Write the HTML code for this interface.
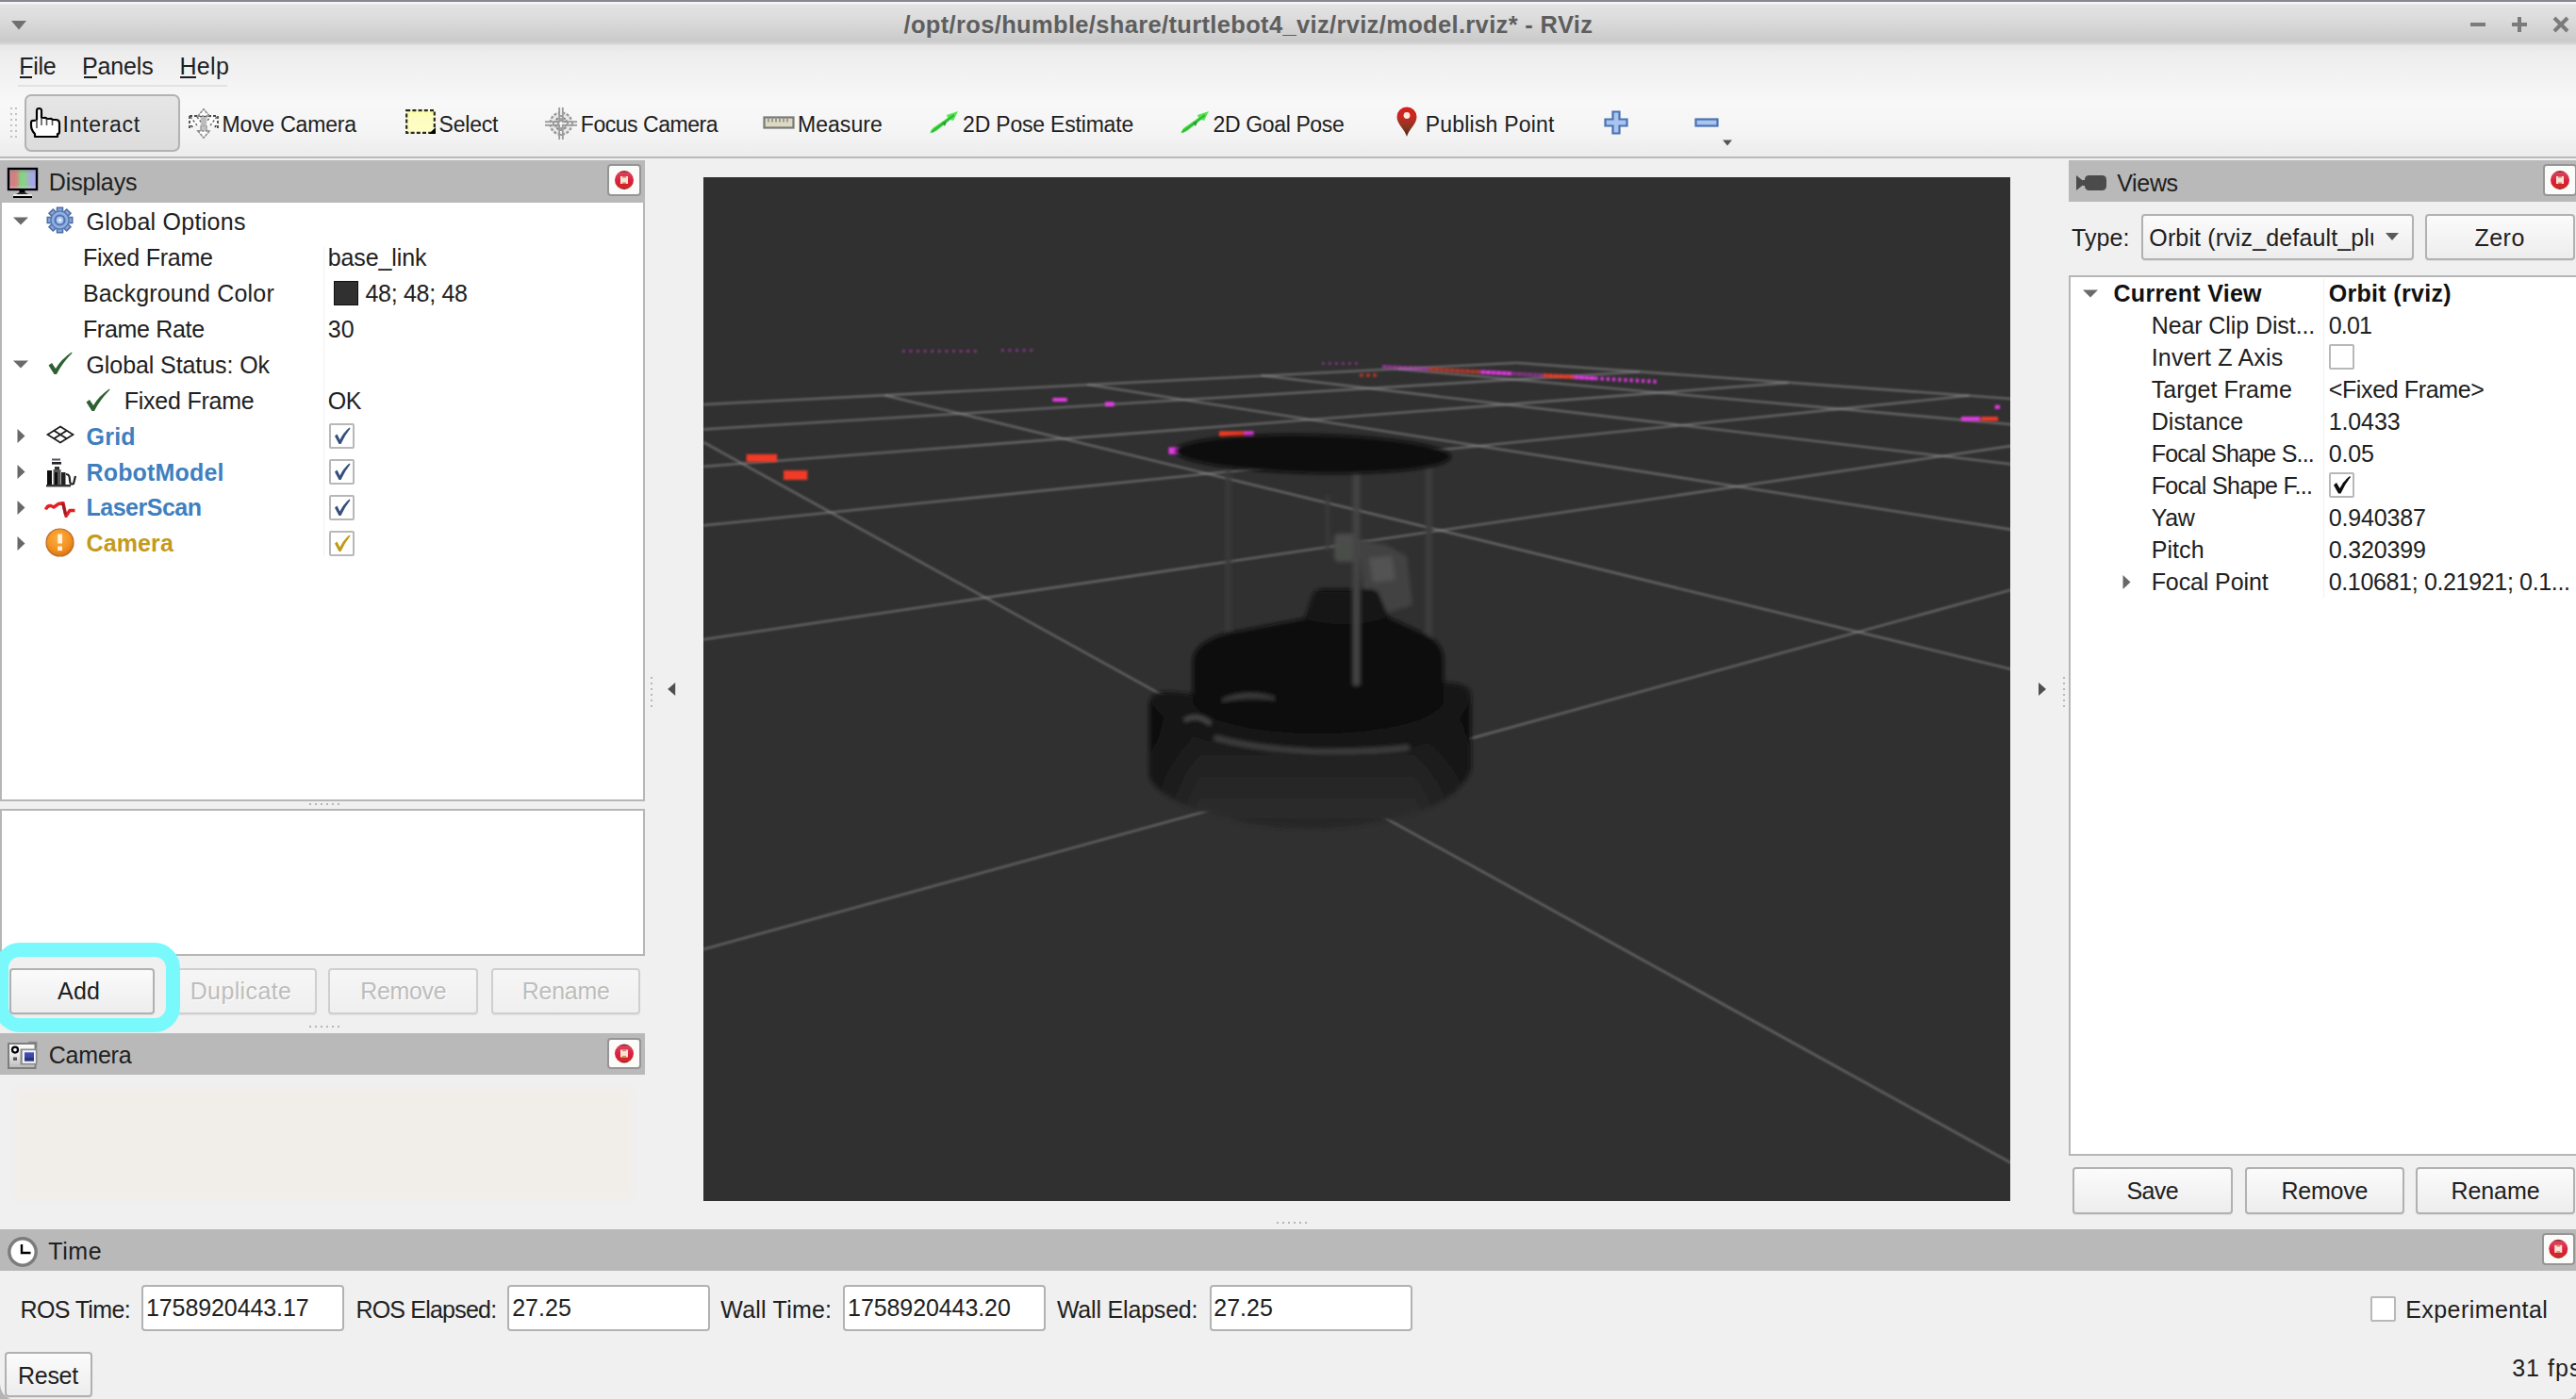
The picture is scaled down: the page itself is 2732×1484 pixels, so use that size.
<!DOCTYPE html>
<html><head><meta charset="utf-8"><title>RViz</title>
<style>
html,body{margin:0;padding:0;background:#f0f0f0;}
#root{position:relative;width:2732px;height:1484px;overflow:hidden;background:#f0f0f0;font-family:"Liberation Sans",sans-serif;}
.a{position:absolute;box-sizing:border-box;}
.t{position:absolute;white-space:pre;font-family:"Liberation Sans",sans-serif;}
.btn{position:absolute;box-sizing:border-box;border:2px solid #b1b1b1;border-radius:4px;background:linear-gradient(#fbfbfb,#ededed);box-shadow:0 1px 1px rgba(0,0,0,.06);}
.btn.dis{border-color:#cfcfcf;background:linear-gradient(#f6f6f6,#efefef);}
.hdr{position:absolute;background:#b9b9b9;}
.cls{position:absolute;box-sizing:border-box;background:#fbfbfa;border:2px solid #959595;border-radius:4px;}
.box{position:absolute;box-sizing:border-box;background:#fff;border:2px solid #b6b6b6;}
.inp{position:absolute;box-sizing:border-box;background:#fff;border:2px solid #b2b2b2;border-radius:4px;}
.cb{position:absolute;box-sizing:border-box;background:#fff;border:2px solid #b8b8b8;border-radius:2px;width:27px;height:27px;}
svg{position:absolute;overflow:visible;}
</style></head><body><div id="root">
<div class='a' style='left:0px;top:0px;width:2732px;height:48px;background:linear-gradient(#878990 0,#878990 1.8px,#f6f6f6 2.4px,#f6f6f6 3.6px,#e3e3e3 5px,#dddddd 18px,#d3d3d3 32px,#cacaca 43px,#d2d2d2 46px,#e6e6e6 48px);'></div>
<svg style='left:12px;top:22px' width='17' height='10'><path d='M0 0H16L8 9.5Z' fill='#707070' filter='url(#ib)'/></svg>
<svg style='left:2619px;top:16px' width='110' height='22'><g stroke='#7b7b7b' stroke-width='4' fill='none'><path d='M1 10H17'/><path d='M45 10H61M53 2V18'/><path d='M90 3L104 17M104 3L90 17'/></g></svg>
<div class='a' style='left:0px;top:48px;width:2732px;height:118px;background:linear-gradient(#e6e6e6 0,#ededed 8px,#f8f8f8 62px,#f5f5f5 90px,#ececec 118px);'></div>
<div class='a' style='left:19px;top:90px;width:222px;height:2px;background:#e2e2e2;'></div>
<div class='a' style='left:21px;top:81px;width:13px;height:2px;background:#1c1c1c;'></div>
<div class='a' style='left:89px;top:81px;width:14px;height:2px;background:#1c1c1c;'></div>
<div class='a' style='left:191px;top:81px;width:17px;height:2px;background:#1c1c1c;'></div>
<div class='a' style='left:0px;top:166px;width:2732px;height:2px;background:#b9b9b9;'></div>
<svg style='left:10px;top:113px' width='10' height='36'><rect x='1' y='1' width='2' height='2' fill='#c2c2c2'/><rect x='1' y='7' width='2' height='2' fill='#c2c2c2'/><rect x='1' y='13' width='2' height='2' fill='#c2c2c2'/><rect x='1' y='19' width='2' height='2' fill='#c2c2c2'/><rect x='1' y='25' width='2' height='2' fill='#c2c2c2'/><rect x='1' y='31' width='2' height='2' fill='#c2c2c2'/><rect x='6' y='1' width='2' height='2' fill='#c2c2c2'/><rect x='6' y='7' width='2' height='2' fill='#c2c2c2'/><rect x='6' y='13' width='2' height='2' fill='#c2c2c2'/><rect x='6' y='19' width='2' height='2' fill='#c2c2c2'/><rect x='6' y='25' width='2' height='2' fill='#c2c2c2'/><rect x='6' y='31' width='2' height='2' fill='#c2c2c2'/></svg>
<div class='a' style='left:26px;top:100px;width:165px;height:61px;border:2px solid #b2b2b2;border-radius:7px;background:linear-gradient(#e6e6e6,#dcdcdc);'></div>
<div class='hdr' style='left:0px;top:170px;width:684px;height:45px;'></div>
<div class='box' style='left:0px;top:215px;width:684px;height:635px;border-top:0;'></div>
<div class='a' style='left:343px;top:262px;width:1px;height:328px;background:#f1f1f1;'></div>
<svg style='left:328px;top:852px' width='40' height='40'><rect x='0' y='0' width='2' height='2' fill='#b5b5b5'/><rect x='6' y='0' width='2' height='2' fill='#b5b5b5'/><rect x='12' y='0' width='2' height='2' fill='#b5b5b5'/><rect x='18' y='0' width='2' height='2' fill='#b5b5b5'/><rect x='24' y='0' width='2' height='2' fill='#b5b5b5'/><rect x='30' y='0' width='2' height='2' fill='#b5b5b5'/></svg>
<div class='box' style='left:0px;top:858px;width:684px;height:156px;'></div>
<svg style='left:328px;top:1088px' width='40' height='40'><rect x='0' y='0' width='2' height='2' fill='#b5b5b5'/><rect x='6' y='0' width='2' height='2' fill='#b5b5b5'/><rect x='12' y='0' width='2' height='2' fill='#b5b5b5'/><rect x='18' y='0' width='2' height='2' fill='#b5b5b5'/><rect x='24' y='0' width='2' height='2' fill='#b5b5b5'/><rect x='30' y='0' width='2' height='2' fill='#b5b5b5'/></svg>
<div class='a' style='left:354px;top:298px;width:26px;height:26px;background:#303030;border:1px solid #111;'></div>
<div class='btn' style='left:9.6px;top:1027px;width:154.0px;height:48.5px;'></div>
<div class='btn dis' style='left:176.5px;top:1027px;width:159.0px;height:48.5px;'></div>
<div class='btn dis' style='left:348.3px;top:1027px;width:158.89999999999998px;height:48.5px;'></div>
<div class='btn dis' style='left:520.6px;top:1027px;width:158.89999999999998px;height:48.5px;'></div>
<div class='a' style='left:-6px;top:1000px;width:196.5px;height:94.59999999999991px;border:15.6px solid #7af9fd;border-radius:27px;'></div>
<div class='hdr' style='left:0px;top:1096px;width:684px;height:44px;'></div>
<div class='a' style='left:17px;top:1156px;width:652px;height:116px;background:#f1ede8;filter:blur(3.5px);'></div>
<div class='a' style='left:746px;top:188px;width:1386px;height:1086px;background:#303030;overflow:hidden;'></div>
<svg style='left:708px;top:724px' width='9' height='14'><path d='M8.2 0V14L0.2 7Z' fill='#505050' filter='url(#ib)'/></svg>
<svg style='left:2162px;top:724px' width='9' height='14'><path d='M0 0V14L8 7Z' fill='#505050' filter='url(#ib)'/></svg>
<svg style='left:2188px;top:718px' width='40' height='40'><rect x='0' y='0' width='2' height='2' fill='#b8b8b8'/><rect x='0' y='6' width='2' height='2' fill='#b8b8b8'/><rect x='0' y='12' width='2' height='2' fill='#b8b8b8'/><rect x='0' y='18' width='2' height='2' fill='#b8b8b8'/><rect x='0' y='24' width='2' height='2' fill='#b8b8b8'/><rect x='0' y='30' width='2' height='2' fill='#b8b8b8'/></svg>
<svg style='left:690px;top:718px' width='40' height='40'><rect x='0' y='0' width='2' height='2' fill='#b8b8b8'/><rect x='0' y='6' width='2' height='2' fill='#b8b8b8'/><rect x='0' y='12' width='2' height='2' fill='#b8b8b8'/><rect x='0' y='18' width='2' height='2' fill='#b8b8b8'/><rect x='0' y='24' width='2' height='2' fill='#b8b8b8'/><rect x='0' y='30' width='2' height='2' fill='#b8b8b8'/></svg>
<svg style='left:1354px;top:1296px' width='40' height='40'><rect x='0' y='0' width='2' height='2' fill='#b5b5b5'/><rect x='6' y='0' width='2' height='2' fill='#b5b5b5'/><rect x='12' y='0' width='2' height='2' fill='#b5b5b5'/><rect x='18' y='0' width='2' height='2' fill='#b5b5b5'/><rect x='24' y='0' width='2' height='2' fill='#b5b5b5'/><rect x='30' y='0' width='2' height='2' fill='#b5b5b5'/></svg>
<div class='hdr' style='left:2194px;top:170px;width:538px;height:44px;'></div>
<div class='btn' style='left:2271px;top:226.5px;width:289px;height:49.30000000000001px;'></div>
<svg style='left:2530px;top:247px' width='15' height='9'><path d='M0 0H14L7 8Z' fill='#5a5a5a'/></svg>
<div class='btn' style='left:2572px;top:226.5px;width:159px;height:49.30000000000001px;'></div>
<div class='box' style='left:2194px;top:292px;width:546px;height:934px;'></div>
<div class='a' style='left:2464px;top:296px;width:1px;height:338px;background:#f1f1f1;'></div>
<div class='cb' style='left:2470px;top:365px;width:27px;height:27px;'></div>
<div class='cb' style='left:2470px;top:501px;width:27px;height:27px;'></div>
<div class='btn' style='left:2198px;top:1238.3px;width:169.69999999999982px;height:49.40000000000009px;'></div>
<div class='btn' style='left:2380.5px;top:1238.3px;width:169.0px;height:49.40000000000009px;'></div>
<div class='btn' style='left:2562.4px;top:1238.3px;width:168.19999999999982px;height:49.40000000000009px;'></div>
<div class='hdr' style='left:0px;top:1304px;width:2732px;height:43.799999999999955px;'></div>
<div class='inp' style='left:150.4px;top:1362.5px;width:214.99999999999997px;height:49.0px;'></div>
<div class='inp' style='left:538.4px;top:1362.5px;width:215.0px;height:49.0px;'></div>
<div class='inp' style='left:894.3px;top:1362.5px;width:215.10000000000014px;height:49.0px;'></div>
<div class='inp' style='left:1282.5px;top:1362.5px;width:215.0999999999999px;height:49.0px;'></div>
<div class='cb' style='left:2514px;top:1375px;width:27px;height:27px;'></div>
<div class='btn' style='left:4.6px;top:1434.2px;width:93.0px;height:47.5px;'></div>
<svg style='left:0;top:1464px' width='14' height='20'><path d='M0 4 Q0.3 15 10.5 20 L0 20 Z' fill='#b4b4b4' filter='url(#ib)'/></svg>
<svg style='left:2722px;top:1474px' width='10' height='10'><path d='M10 2.5 Q8.5 8 2.5 10 L10 10 Z' fill='#b8b8b8' filter='url(#ib)'/></svg>
<svg width='0' height='0' style='left:0;top:0'><defs><filter id='ib' x='-10%' y='-10%' width='120%' height='120%'><feGaussianBlur stdDeviation='0.6'/></filter></defs></svg>
<svg style='left:32px;top:114px' width='32' height='32' viewBox='0 0 32 32' ><g filter='url(#ib)'><path d='M7 13 V3.5 Q7 1 9.5 1 Q12 1 12 3.5 V11 H15 Q17 10.5 17.5 12 H21 Q23 11.5 23.5 13 H27 Q31 13 31 17 V26 Q31 28 29 28 V31 H5 V28 Q1 24 1 19 V16 Q1 13.5 4 14 Z' fill='#fff' stroke='#000' stroke-width='2.2' stroke-linejoin='round'/>
<path d='M7 13V22M12 11V19M17.5 12.5V19M23.5 13.5V19' stroke='#555' stroke-width='1.6' fill='none'/></g></svg>
<svg style='left:199px;top:115px' width='34' height='32' viewBox='0 0 34 32' ><g filter='url(#ib)'>
<path d='M17 1 L23 8 H20 V24 H23 L17 31 L11 24 H14 V8 H11 Z' fill='#c4c4c4' stroke='#9a9a9a' stroke-width='1.4'/>
<path d='M1 8 H33 V19 H1 Z' fill='none'/>
<path d='M2 8 H32 V20 H29 L32 14 M2 8 V20 H5 L2 14' fill='none' stroke='#4a4a4a' stroke-width='1.8' stroke-dasharray='3 2'/>
<path d='M3 10 H31 V18 H3 Z' fill='#fff' fill-opacity='.85'/>
<path d='M3 9 L10 18 M31 9 L24 18 M10 9 L17 18 L24 9' stroke='#6a6a6a' stroke-width='1.5' fill='none' stroke-dasharray='2.5 2'/>
<rect x='14' y='9' width='6' height='9' fill='#bdbdbd'/>
<path d='M11 24 H23 L17 31 Z' fill='#fff' stroke='#8a8a8a' stroke-width='1.5' stroke-dasharray='2.5 1.5'/>
<path d='M11 8 H23 L17 1 Z' fill='#fff' stroke='#8a8a8a' stroke-width='1.5' stroke-dasharray='2.5 1.5'/>
</g></svg>
<svg style='left:430px;top:116px' width='32' height='26' viewBox='0 0 32 26' ><defs><linearGradient id='sy' x1='0' y1='0' x2='0' y2='1'><stop offset='0' stop-color='#ffffa8'/><stop offset='.3' stop-color='#fdfdc0'/><stop offset='1' stop-color='#fdfdc6'/></linearGradient></defs>
<g filter='url(#ib)'><rect x='1.2' y='1.2' width='29.6' height='23.6' fill='url(#sy)' stroke='#2a2a1a' stroke-width='2.2' stroke-dasharray='4 2.2'/>
<path d='M32 19 V26 H25 Z' fill='#000'/></g></svg>
<svg style='left:577px;top:113px' width='36' height='36' viewBox='0 0 36 36' ><g filter='url(#ib)' fill='none'>
<circle cx='18' cy='18' r='11.5' fill='#e9e9e9' stroke='#9a9a9a' stroke-width='2.4' stroke-dasharray='3 1.6'/>
<circle cx='18' cy='18' r='6.5' fill='#d4d4d4' stroke='#8c8c8c' stroke-width='2' stroke-dasharray='2.5 1.5'/>
<path d='M18 1 V35 M1 18 H35' stroke='#9c9c9c' stroke-width='5.5'/>
<path d='M18 1 V35 M1 18 H35' stroke='#fff' stroke-width='1.6' stroke-dasharray='8 2 3 2'/>
<path d='M13 13 H23 V23 H13 Z' stroke='#8a8a8a' stroke-width='1.4' stroke-dasharray='2 2'/>
</g></svg>
<svg style='left:809px;top:123px' width='34' height='14' viewBox='0 0 34 14' ><g filter='url(#ib)'><rect x='1.5' y='1.5' width='31' height='11' fill='#dedac2' stroke='#787878' stroke-width='2.2'/>
<path d='M6 3V6.5M10 3V6.5M14 3V6.5M18 3V6.5M22 3V6.5M26 3V6.5' stroke='#8a8a80' stroke-width='1.6'/></g></svg>
<svg style='left:985px;top:117px' width='32' height='26' viewBox='0 0 32 26' ><g filter='url(#ib)'><path d='M1 24.5 L4 19 L20 8 L19 5 L31 1 L26 11 L23 10 L8 22 Z' fill='#4fe94f'/>
<path d='M3 23 L27 5' stroke='#36b83c' stroke-width='2.4' fill='none'/><path d='M14 13 l5 -1 l-2 5z' fill='#2a9a30'/></g></svg>
<svg style='left:1251px;top:117px' width='32' height='26' viewBox='0 0 32 26' ><g filter='url(#ib)'><path d='M1 24.5 L4 19 L20 8 L19 5 L31 1 L26 11 L23 10 L8 22 Z' fill='#4fe94f'/>
<path d='M3 23 L27 5' stroke='#36b83c' stroke-width='2.4' fill='none'/><path d='M14 13 l5 -1 l-2 5z' fill='#2a9a30'/></g></svg>
<svg style='left:1480px;top:113px' width='24' height='33' viewBox='0 0 24 33' ><defs><linearGradient id='pp' x1='0' y1='0' x2='0' y2='1'><stop offset='0' stop-color='#d81e1e'/><stop offset='.35' stop-color='#c42a22'/><stop offset='.7' stop-color='#86361f'/><stop offset='1' stop-color='#4a2418'/></linearGradient></defs>
<g filter='url(#ib)'><path d='M12 32 C10 24 1.5 19 1.5 11 A10.5 10.5 0 0 1 22.5 11 C22.5 19 14 24 12 32 Z' fill='url(#pp)'/>
<circle cx='12' cy='9.5' r='3.4' fill='#ffe9dc'/></g></svg>
<svg style='left:1701px;top:117px' width='26' height='26' viewBox='0 0 26 26' ><g filter='url(#ib)'><path d='M9.5 1.5 H16.5 V9.5 H24.5 V16.5 H16.5 V24.5 H9.5 V16.5 H1.5 V9.5 H9.5 Z' fill='#a9c4ee' stroke='#4a72b4' stroke-width='2.2'/></g></svg>
<svg style='left:1797px;top:125px' width='26' height='10' viewBox='0 0 26 10' ><g filter='url(#ib)'><rect x='1.5' y='1.5' width='23' height='7' fill='#a9c4ee' stroke='#4a72b4' stroke-width='2.2'/></g></svg>
<svg style='left:1827px;top:148px' width='10' height='7' viewBox='0 0 10 7' ><path d='M0 0.5 H10 L5 6.5 Z' fill='#555'/></svg>
<svg style='left:8px;top:178px' width='32' height='32' viewBox='0 0 32 32' ><defs><linearGradient id='mg' x1='0' y1='0' x2='1' y2='0'><stop offset='0' stop-color='#c88'/><stop offset='.22' stop-color='#d27f80'/><stop offset='.34' stop-color='#c09a80'/><stop offset='.42' stop-color='#86cf86'/><stop offset='.6' stop-color='#8fcf8c'/><stop offset='.7' stop-color='#9fb4c8'/><stop offset='.85' stop-color='#a6a6ee'/><stop offset='1' stop-color='#aab'/></linearGradient>
<linearGradient id='mg2' x1='0' y1='0' x2='0' y2='1'><stop offset='0' stop-color='#888' stop-opacity='.55'/><stop offset='.2' stop-color='#888' stop-opacity='0'/><stop offset='.85' stop-color='#fff' stop-opacity='0'/><stop offset='1' stop-color='#fff' stop-opacity='.35'/></linearGradient></defs>
<g filter='url(#ib)'><rect x='1' y='1' width='30' height='22' fill='url(#mg)' stroke='#050010' stroke-width='2.4'/><rect x='2.2' y='2.2' width='27.6' height='19.6' fill='url(#mg2)'/>
<rect x='12.5' y='24' width='6' height='4' fill='#000'/><rect x='6' y='28' width='20' height='2' fill='#e8e8e8'/><rect x='6' y='30' width='20' height='2' fill='#000'/><path d='M9 28 L12.5 26 H18.5 L22 28' fill='#222'/></g></svg>
<svg style='left:14px;top:230px' width='16' height='9' viewBox='0 0 16 9' ><path d='M0 0.5 H16 L8 8.5 Z' fill='#6a6a6a' filter='url(#ib)'/></svg>
<svg style='left:14px;top:382px' width='16' height='9' viewBox='0 0 16 9' ><path d='M0 0.5 H16 L8 8.5 Z' fill='#6a6a6a' filter='url(#ib)'/></svg>
<svg style='left:18px;top:455.0px' width='9' height='15' viewBox='0 0 9 15' ><path d='M0.5 0 V15 L8.5 7.5 Z' fill='#676767' filter='url(#ib)'/></svg>
<svg style='left:18px;top:492.8px' width='9' height='15' viewBox='0 0 9 15' ><path d='M0.5 0 V15 L8.5 7.5 Z' fill='#676767' filter='url(#ib)'/></svg>
<svg style='left:18px;top:530.7px' width='9' height='15' viewBox='0 0 9 15' ><path d='M0.5 0 V15 L8.5 7.5 Z' fill='#676767' filter='url(#ib)'/></svg>
<svg style='left:18px;top:568.5px' width='9' height='15' viewBox='0 0 9 15' ><path d='M0.5 0 V15 L8.5 7.5 Z' fill='#676767' filter='url(#ib)'/></svg>
<svg style='left:2209px;top:307px' width='16' height='9' viewBox='0 0 16 9' ><path d='M0 0.5 H16 L8 8.5 Z' fill='#6a6a6a' filter='url(#ib)'/></svg>
<svg style='left:2251px;top:609.5px' width='9' height='15' viewBox='0 0 9 15' ><path d='M0.5 0 V15 L8.5 7.5 Z' fill='#676767' filter='url(#ib)'/></svg>
<svg style='left:49.5px;top:219.5px' width='27' height='27' viewBox='0 0 27 27' ><g filter='url(#ib)'><rect x='10.5' y='0.3' width='6' height='6' transform='rotate(0 13.5 13.5)' fill='#86a6dc' stroke='#4f6fa4' stroke-width='1.6'/><rect x='10.5' y='0.3' width='6' height='6' transform='rotate(45 13.5 13.5)' fill='#86a6dc' stroke='#4f6fa4' stroke-width='1.6'/><rect x='10.5' y='0.3' width='6' height='6' transform='rotate(90 13.5 13.5)' fill='#86a6dc' stroke='#4f6fa4' stroke-width='1.6'/><rect x='10.5' y='0.3' width='6' height='6' transform='rotate(135 13.5 13.5)' fill='#86a6dc' stroke='#4f6fa4' stroke-width='1.6'/><rect x='10.5' y='0.3' width='6' height='6' transform='rotate(180 13.5 13.5)' fill='#86a6dc' stroke='#4f6fa4' stroke-width='1.6'/><rect x='10.5' y='0.3' width='6' height='6' transform='rotate(225 13.5 13.5)' fill='#86a6dc' stroke='#4f6fa4' stroke-width='1.6'/><rect x='10.5' y='0.3' width='6' height='6' transform='rotate(270 13.5 13.5)' fill='#86a6dc' stroke='#4f6fa4' stroke-width='1.6'/><rect x='10.5' y='0.3' width='6' height='6' transform='rotate(315 13.5 13.5)' fill='#86a6dc' stroke='#4f6fa4' stroke-width='1.6'/><circle cx='13.5' cy='13.5' r='9.6' fill='#8eaee4' stroke='#5676ac' stroke-width='1.4'/>
<circle cx='13.5' cy='13.5' r='5' fill='#a9c6f4' stroke='#5273ad' stroke-width='2.2'/><circle cx='13.5' cy='13.5' r='1.8' fill='#eaf3ff'/></g></svg>
<svg style='left:50px;top:372px' width='27' height='26' viewBox='0 0 27 26' ><path d='M1.5 15.5 L5 13 L9 19 Q15 9 26 1.5 L26.5 2.5 Q16 13 10 25 H7.5 Z' fill='#2f6130' filter='url(#ib)'/></svg>
<svg style='left:90px;top:410.5px' width='27' height='26' viewBox='0 0 27 26' ><path d='M1.5 15.5 L5 13 L9 19 Q15 9 26 1.5 L26.5 2.5 Q16 13 10 25 H7.5 Z' fill='#2f6130' filter='url(#ib)'/></svg>
<svg style='left:49px;top:451px' width='30' height='20' viewBox='0 0 30 20' ><g filter='url(#ib)' fill='none' stroke='#1a1a1a' stroke-width='1.7'><path d='M15 1.5 L28.5 10 L15 18.5 L1.5 10 Z'/><path d='M8.2 5.8 L21.8 14.2 M21.8 5.8 L8.2 14.2'/></g></svg>
<svg style='left:48px;top:485px' width='33' height='32' viewBox='0 0 33 32' ><g filter='url(#ib)'><rect x='7' y='1.5' width='9' height='2' fill='#556'/><rect x='7' y='5' width='10' height='2.6' fill='#222'/>
<rect x='10' y='10' width='5' height='4' fill='#333'/><rect x='2' y='14' width='5' height='17' fill='#111'/><rect x='8.5' y='13' width='8' height='18' fill='#555'/><rect x='10' y='16' width='3' height='15' fill='#111'/>
<rect x='17' y='16' width='4.5' height='15' fill='#222'/><path d='M22 18 Q26 18 26 24 Q26 30 30 28 L32 20' stroke='#222' stroke-width='2.2' fill='none'/><rect x='1' y='29' width='26' height='2.4' fill='#333'/></g></svg>
<svg style='left:47px;top:531px' width='34' height='20' viewBox='0 0 34 20' ><g filter='url(#ib)' fill='none' stroke-linejoin='round'><path d='M1.5 9.5 Q3 5 7 5.5 L10 7 L15 3.5 L20 2.5 L23 16.5 L27 10.5 L32.5 10.5' stroke='#e02424' stroke-width='3.4'/><path d='M19.5 3 L22.5 15' stroke='#9c1c28' stroke-width='3'/></g></svg>
<svg style='left:47.5px;top:559.5px' width='31' height='31' viewBox='0 0 31 31' ><defs><radialGradient id='wg' cx='.45' cy='.35' r='.7'><stop offset='0' stop-color='#fbb040'/><stop offset='.6' stop-color='#f39222'/><stop offset='1' stop-color='#d86f10'/></radialGradient></defs>
<g filter='url(#ib)'><circle cx='15.5' cy='15.5' r='14.5' fill='url(#wg)' stroke='#b86a28' stroke-width='1.2'/><rect x='13.2' y='6.5' width='4.8' height='10' fill='#fff3df'/><rect x='13.2' y='19.5' width='4.8' height='4.6' fill='#fff3df'/></g></svg>
<div class='cb' style='left:348.5px;top:449.0px;width:27.0px;height:27.0px;'></div>
<svg style='left:348.5px;top:449.0px' width='27' height='27' viewBox='0 0 27 27' ><path d='M6 13.5 L8.5 11.5 L11.5 17.5 Q15 10 21.5 4.5 L22.5 5.5 Q16.5 13 12.5 22 H10.5 Z' fill='#35507c' filter='url(#ib)'/></svg>
<div class='cb' style='left:348.5px;top:486.8px;width:27.0px;height:26.999999999999943px;'></div>
<svg style='left:348.5px;top:486.8px' width='27' height='27' viewBox='0 0 27 27' ><path d='M6 13.5 L8.5 11.5 L11.5 17.5 Q15 10 21.5 4.5 L22.5 5.5 Q16.5 13 12.5 22 H10.5 Z' fill='#35507c' filter='url(#ib)'/></svg>
<div class='cb' style='left:348.5px;top:524.7px;width:27.0px;height:27.0px;'></div>
<svg style='left:348.5px;top:524.7px' width='27' height='27' viewBox='0 0 27 27' ><path d='M6 13.5 L8.5 11.5 L11.5 17.5 Q15 10 21.5 4.5 L22.5 5.5 Q16.5 13 12.5 22 H10.5 Z' fill='#35507c' filter='url(#ib)'/></svg>
<div class='cb' style='left:348.5px;top:562.5px;width:27.0px;height:27.0px;'></div>
<svg style='left:348.5px;top:562.5px' width='27' height='27' viewBox='0 0 27 27' ><path d='M6 13.5 L8.5 11.5 L11.5 17.5 Q15 10 21.5 4.5 L22.5 5.5 Q16.5 13 12.5 22 H10.5 Z' fill='#c19a16' filter='url(#ib)'/></svg>
<svg style='left:2470px;top:501px' width='27' height='27' viewBox='0 0 27 27' ><path d='M5 13.5 L8 11 L11.5 17 Q15 9.5 22 4 L23 5 Q16.5 13 12.5 22.5 H10 Z' fill='#111' filter='url(#ib)'/></svg>
<div class='cls' style='left:644px;top:174px;width:36px;height:34px'></div>
<svg style='left:644px;top:174px' width='36' height='34' viewBox='0 0 36 34' ><defs><linearGradient id='cg' x1='0' y1='0' x2='0' y2='1'><stop offset='0' stop-color='#6e2a2a'/><stop offset='.14' stop-color='#e04058'/><stop offset='.5' stop-color='#d82446'/><stop offset='.72' stop-color='#d42228'/><stop offset='.9' stop-color='#d62a2a'/><stop offset='1' stop-color='#5a1c1c'/></linearGradient></defs>
<g filter='url(#ib)'><circle cx='18.0' cy='17.0' r='10' fill='url(#cg)'/><rect x='14.0' y='13.0' width='8' height='8' fill='#ffe1d4'/><rect x='16.0' y='13.0' width='4' height='1.6' fill='#b89070'/><rect x='16.0' y='19.4' width='4' height='1.6' fill='#b89070'/></g></svg>
<div class='cls' style='left:644px;top:1100.5px;width:36px;height:33px'></div>
<svg style='left:644px;top:1100.5px' width='36' height='33' viewBox='0 0 36 33' ><defs><linearGradient id='cg' x1='0' y1='0' x2='0' y2='1'><stop offset='0' stop-color='#6e2a2a'/><stop offset='.14' stop-color='#e04058'/><stop offset='.5' stop-color='#d82446'/><stop offset='.72' stop-color='#d42228'/><stop offset='.9' stop-color='#d62a2a'/><stop offset='1' stop-color='#5a1c1c'/></linearGradient></defs>
<g filter='url(#ib)'><circle cx='18.0' cy='16.5' r='10' fill='url(#cg)'/><rect x='14.0' y='12.5' width='8' height='8' fill='#ffe1d4'/><rect x='16.0' y='12.5' width='4' height='1.6' fill='#b89070'/><rect x='16.0' y='18.9' width='4' height='1.6' fill='#b89070'/></g></svg>
<div class='cls' style='left:2696.5px;top:174px;width:36px;height:34px'></div>
<svg style='left:2696.5px;top:174px' width='36' height='34' viewBox='0 0 36 34' ><defs><linearGradient id='cg' x1='0' y1='0' x2='0' y2='1'><stop offset='0' stop-color='#6e2a2a'/><stop offset='.14' stop-color='#e04058'/><stop offset='.5' stop-color='#d82446'/><stop offset='.72' stop-color='#d42228'/><stop offset='.9' stop-color='#d62a2a'/><stop offset='1' stop-color='#5a1c1c'/></linearGradient></defs>
<g filter='url(#ib)'><circle cx='18.0' cy='17.0' r='10' fill='url(#cg)'/><rect x='14.0' y='13.0' width='8' height='8' fill='#ffe1d4'/><rect x='16.0' y='13.0' width='4' height='1.6' fill='#b89070'/><rect x='16.0' y='19.4' width='4' height='1.6' fill='#b89070'/></g></svg>
<div class='cls' style='left:2696px;top:1308px;width:34.5px;height:33.5px'></div>
<svg style='left:2696px;top:1308px' width='34.5' height='33.5' viewBox='0 0 34.5 33.5' ><defs><linearGradient id='cg' x1='0' y1='0' x2='0' y2='1'><stop offset='0' stop-color='#6e2a2a'/><stop offset='.14' stop-color='#e04058'/><stop offset='.5' stop-color='#d82446'/><stop offset='.72' stop-color='#d42228'/><stop offset='.9' stop-color='#d62a2a'/><stop offset='1' stop-color='#5a1c1c'/></linearGradient></defs>
<g filter='url(#ib)'><circle cx='17.25' cy='16.75' r='10' fill='url(#cg)'/><rect x='13.25' y='12.75' width='8' height='8' fill='#ffe1d4'/><rect x='15.25' y='12.75' width='4' height='1.6' fill='#b89070'/><rect x='15.25' y='19.15' width='4' height='1.6' fill='#b89070'/></g></svg>
<svg style='left:8px;top:1104px' width='32' height='30' viewBox='0 0 32 30' ><defs><linearGradient id='cm1' x1='0' y1='0' x2='0' y2='1'><stop offset='0' stop-color='#fdfdfd'/><stop offset='.5' stop-color='#e8e8e8'/><stop offset='1' stop-color='#b8b8b8'/></linearGradient>
<linearGradient id='cm2' x1='0' y1='0' x2='0' y2='1'><stop offset='0' stop-color='#4552b4'/><stop offset='.55' stop-color='#3a45a2'/><stop offset='.6' stop-color='#2c3684'/><stop offset='1' stop-color='#2a3378'/></linearGradient></defs>
<g filter='url(#ib)'><rect x='22' y='0.8' width='9.4' height='7' fill='#8a8a8a'/><rect x='26.5' y='2.5' width='2.4' height='2' fill='#ddd'/>
<rect x='1' y='3' width='28.5' height='26' fill='url(#cm1)' stroke='#7e7e7e' stroke-width='2'/>
<circle cx='8' cy='9.6' r='3' fill='#fff' stroke='#000' stroke-width='2.2'/><rect x='6' y='17.5' width='4' height='3.4' fill='#555'/>
<rect x='13.5' y='8.5' width='18' height='17' fill='#8c8c8c'/><rect x='15.8' y='10.2' width='14' height='13.6' fill='#f4f6ff'/><rect x='18' y='12.3' width='10' height='9.4' fill='url(#cm2)'/></g></svg>
<svg style='left:7px;top:1311px' width='34' height='34' viewBox='0 0 34 34' ><g filter='url(#ib)'><circle cx='17' cy='17' r='14.2' fill='#fff' stroke='#7c7c7c' stroke-width='3.4'/><path d='M16 9 V18 H25.5' fill='none' stroke='#000' stroke-width='2.4'/></g></svg>
<svg style='left:2201px;top:185px' width='34' height='18' viewBox='0 0 34 18' ><g filter='url(#ib)'><path d='M1 1 L11 9 L1 17 Z' fill='#4c4c4c'/><rect x='10' y='1' width='23' height='16' rx='4.5' fill='#4c4c4c'/><rect x='8' y='6' width='5' height='6' fill='#4c4c4c'/></g></svg>
<svg style='left:746px;top:188px' width='1386' height='1086' viewBox='746 188 1386 1086'><defs><filter id='b1' x='-5%' y='-5%' width='110%' height='110%'><feGaussianBlur stdDeviation='0.9'/></filter><filter id='b2' x='-10%' y='-10%' width='120%' height='120%'><feGaussianBlur stdDeviation='2.2'/></filter><filter id='b3' x='-10%' y='-10%' width='120%' height='120%'><feGaussianBlur stdDeviation='5'/></filter><linearGradient id='bg1' x1='0' y1='0' x2='0' y2='1'><stop offset='0' stop-color='#161616'/><stop offset='0.4' stop-color='#1c1c1c'/><stop offset='0.62' stop-color='#242424'/><stop offset='0.88' stop-color='#2b2b2b'/><stop offset='1' stop-color='#252525'/></linearGradient><linearGradient id='bg2' x1='0' y1='0' x2='1' y2='0'><stop offset='0' stop-color='#000' stop-opacity='.45'/><stop offset='.16' stop-color='#000' stop-opacity='0'/><stop offset='.82' stop-color='#000' stop-opacity='0'/><stop offset='1' stop-color='#000' stop-opacity='.4'/></linearGradient><clipPath id='vp'><rect x='746' y='188' width='1386' height='1086'/></clipPath></defs><g clip-path='url(#vp)'><g stroke='#a0a0a4' stroke-opacity='.5' stroke-width='2.3' filter='url(#b1)'><line x1='746.0' y1='429.1' x2='1608.5' y2='384.8'/><line x1='746.0' y1='455.5' x2='1739.0' y2='394.3'/><line x1='746.0' y1='494.9' x2='1896.5' y2='406.0'/><line x1='746.0' y1='557.4' x2='2088.5' y2='419.7'/><line x1='746.0' y1='678.3' x2='2200.0' y2='463.1'/><line x1='746.0' y1='1007.0' x2='2200.0' y2='607.3'/><line x1='746.0' y1='469.1' x2='2200.0' y2='1270.6'/><line x1='938.4' y1='419.3' x2='2200.0' y2='726.2'/><line x1='1153.0' y1='407.9' x2='2200.0' y2='572.2'/><line x1='1337.8' y1='398.4' x2='2200.0' y2='500.3'/><line x1='1482.0' y1='391.4' x2='2200.0' y2='456.2'/><line x1='1608.5' y1='384.8' x2='2200.0' y2='427.9'/></g><g filter='url(#b1)'><rect x='957.0' y='371.3' width='2.6' height='2.4' fill='#e63ae6' fill-opacity='0.62'/><rect x='964.6' y='371.3' width='2.6' height='2.4' fill='#e63ae6' fill-opacity='0.62'/><rect x='972.2' y='371.3' width='2.6' height='2.4' fill='#e63ae6' fill-opacity='0.62'/><rect x='979.8' y='371.3' width='2.6' height='2.4' fill='#e63ae6' fill-opacity='0.62'/><rect x='987.4' y='371.3' width='2.6' height='2.4' fill='#e63ae6' fill-opacity='0.62'/><rect x='995.0' y='371.3' width='2.6' height='2.4' fill='#e63ae6' fill-opacity='0.62'/><rect x='1002.6' y='371.3' width='2.6' height='2.4' fill='#e63ae6' fill-opacity='0.62'/><rect x='1010.2' y='371.3' width='2.6' height='2.4' fill='#e63ae6' fill-opacity='0.62'/><rect x='1017.8' y='371.3' width='2.6' height='2.4' fill='#e63ae6' fill-opacity='0.62'/><rect x='1025.4' y='371.3' width='2.6' height='2.4' fill='#e63ae6' fill-opacity='0.62'/><rect x='1033.0' y='371.3' width='2.6' height='2.4' fill='#e63ae6' fill-opacity='0.62'/><rect x='1062.0' y='370.3' width='2.6' height='2.4' fill='#e63ae6' fill-opacity='0.62'/><rect x='1069.6' y='370.3' width='2.6' height='2.4' fill='#e63ae6' fill-opacity='0.62'/><rect x='1077.2' y='370.3' width='2.6' height='2.4' fill='#e63ae6' fill-opacity='0.62'/><rect x='1084.8' y='370.3' width='2.6' height='2.4' fill='#e63ae6' fill-opacity='0.62'/><rect x='1092.4' y='370.3' width='2.6' height='2.4' fill='#e63ae6' fill-opacity='0.62'/><rect x='1402.0' y='384.3' width='2.6' height='2.4' fill='#e63ae6' fill-opacity='0.55'/><rect x='1409.0' y='384.3' width='2.6' height='2.4' fill='#e63ae6' fill-opacity='0.55'/><rect x='1416.0' y='384.3' width='2.6' height='2.4' fill='#e63ae6' fill-opacity='0.55'/><rect x='1423.0' y='384.3' width='2.6' height='2.4' fill='#e63ae6' fill-opacity='0.55'/><rect x='1430.0' y='384.3' width='2.6' height='2.4' fill='#e63ae6' fill-opacity='0.55'/><rect x='1437.0' y='384.3' width='2.6' height='2.4' fill='#e63ae6' fill-opacity='0.55'/><rect x='1442.0' y='396.0' width='4.0' height='4.0' fill='#f03a26' fill-opacity='0.6'/><rect x='1449.0' y='396.0' width='4.0' height='4.0' fill='#f03a26' fill-opacity='0.6'/><rect x='1456.0' y='396.0' width='4.0' height='4.0' fill='#f03a26' fill-opacity='0.6'/><rect x='1116.4' y='422.0' width='15.4' height='4.0' fill='#e63ae6' fill-opacity='1'/><rect x='1172.0' y='426.4' width='9.6' height='4.6' fill='#e63ae6' fill-opacity='1'/><rect x='791.6' y='481.8' width='32.6' height='8.2' fill='#f03a26' fill-opacity='1'/><rect x='831.0' y='499.0' width='25.3' height='10.0' fill='#f03a26' fill-opacity='1'/><rect x='1293.0' y='457.4' width='28.0' height='6.2' fill='#f03a26' fill-opacity='1'/><rect x='1320.0' y='457.4' width='9.7' height='6.2' fill='#e63ae6' fill-opacity='1'/><rect x='1239.5' y='474.5' width='12.7' height='7.3' fill='#e63ae6' fill-opacity='1'/><rect x='1466.0' y='387.0' width='5.0' height='4.0' fill='#e63ae6' fill-opacity='0.5'/><rect x='1471.5' y='387.3' width='5.0' height='4.0' fill='#e63ae6' fill-opacity='0.5'/><rect x='1477.0' y='387.6' width='5.0' height='4.0' fill='#e63ae6' fill-opacity='0.5'/><rect x='1482.5' y='387.9' width='5.0' height='4.0' fill='#e63ae6' fill-opacity='0.5'/><rect x='1488.0' y='388.2' width='5.0' height='4.0' fill='#e63ae6' fill-opacity='0.5'/><rect x='1493.5' y='388.5' width='5.0' height='4.0' fill='#e63ae6' fill-opacity='0.5'/><rect x='1499.0' y='388.8' width='5.0' height='4.0' fill='#e63ae6' fill-opacity='0.5'/><rect x='1504.5' y='389.1' width='5.0' height='4.0' fill='#e63ae6' fill-opacity='0.5'/><rect x='1510.0' y='389.4' width='5.0' height='4.0' fill='#e63ae6' fill-opacity='0.5'/><rect x='1515.5' y='389.7' width='5.0' height='4.0' fill='#f03a26' fill-opacity='0.7'/><rect x='1521.0' y='390.0' width='5.0' height='4.0' fill='#f03a26' fill-opacity='0.7'/><rect x='1526.5' y='390.3' width='5.0' height='4.0' fill='#f03a26' fill-opacity='0.7'/><rect x='1532.0' y='390.6' width='5.0' height='4.0' fill='#f03a26' fill-opacity='0.7'/><rect x='1537.5' y='390.9' width='5.0' height='4.0' fill='#f03a26' fill-opacity='0.7'/><rect x='1543.0' y='391.2' width='5.0' height='4.0' fill='#f03a26' fill-opacity='0.7'/><rect x='1548.5' y='391.5' width='5.0' height='4.0' fill='#f03a26' fill-opacity='0.7'/><rect x='1554.0' y='391.8' width='5.0' height='4.0' fill='#f03a26' fill-opacity='0.7'/><rect x='1559.5' y='392.1' width='5.0' height='4.0' fill='#f03a26' fill-opacity='0.7'/><rect x='1565.0' y='392.4' width='5.0' height='4.0' fill='#f03a26' fill-opacity='0.7'/><rect x='1570.5' y='392.7' width='5.0' height='4.0' fill='#e63ae6' fill-opacity='1'/><rect x='1576.0' y='393.0' width='5.0' height='4.0' fill='#e63ae6' fill-opacity='1'/><rect x='1581.5' y='393.3' width='5.0' height='4.0' fill='#e63ae6' fill-opacity='1'/><rect x='1587.0' y='393.6' width='5.0' height='4.0' fill='#e63ae6' fill-opacity='1'/><rect x='1592.5' y='393.9' width='5.0' height='4.0' fill='#e63ae6' fill-opacity='1'/><rect x='1598.0' y='394.2' width='5.0' height='4.0' fill='#e63ae6' fill-opacity='1'/><rect x='1603.5' y='394.5' width='5.0' height='4.0' fill='#e63ae6' fill-opacity='0.45'/><rect x='1609.0' y='394.8' width='5.0' height='4.0' fill='#e63ae6' fill-opacity='0.45'/><rect x='1614.5' y='395.1' width='5.0' height='4.0' fill='#e63ae6' fill-opacity='0.45'/><rect x='1620.0' y='395.4' width='5.0' height='4.0' fill='#e63ae6' fill-opacity='0.45'/><rect x='1625.5' y='395.7' width='5.0' height='4.0' fill='#e63ae6' fill-opacity='0.45'/><rect x='1631.0' y='396.0' width='5.0' height='4.0' fill='#e63ae6' fill-opacity='0.45'/><rect x='1636.5' y='396.3' width='5.0' height='4.0' fill='#f03a26' fill-opacity='1'/><rect x='1642.0' y='396.6' width='5.0' height='4.0' fill='#f03a26' fill-opacity='1'/><rect x='1647.5' y='396.9' width='5.0' height='4.0' fill='#f03a26' fill-opacity='1'/><rect x='1653.0' y='397.2' width='5.0' height='4.0' fill='#f03a26' fill-opacity='1'/><rect x='1658.5' y='397.5' width='5.0' height='4.0' fill='#f03a26' fill-opacity='1'/><rect x='1664.0' y='397.8' width='5.0' height='4.0' fill='#f03a26' fill-opacity='1'/><rect x='1669.5' y='398.2' width='5.0' height='4.0' fill='#e63ae6' fill-opacity='1'/><rect x='1675.0' y='398.5' width='5.0' height='4.0' fill='#e63ae6' fill-opacity='1'/><rect x='1680.5' y='398.8' width='5.0' height='4.0' fill='#e63ae6' fill-opacity='1'/><rect x='1686.0' y='399.1' width='5.0' height='4.0' fill='#e63ae6' fill-opacity='1'/><rect x='1691.5' y='399.4' width='3.0' height='4.0' fill='#e63ae6' fill-opacity='1'/><rect x='1697.7' y='399.7' width='3.0' height='4.0' fill='#e63ae6' fill-opacity='1'/><rect x='1703.9' y='400.0' width='3.0' height='4.0' fill='#e63ae6' fill-opacity='1'/><rect x='1710.1' y='400.4' width='3.0' height='4.0' fill='#e63ae6' fill-opacity='1'/><rect x='1716.3' y='400.7' width='3.0' height='4.0' fill='#e63ae6' fill-opacity='1'/><rect x='1722.5' y='401.1' width='3.0' height='4.0' fill='#e63ae6' fill-opacity='1'/><rect x='1728.7' y='401.4' width='3.0' height='4.0' fill='#e63ae6' fill-opacity='1'/><rect x='1734.9' y='401.7' width='3.0' height='4.0' fill='#e63ae6' fill-opacity='1'/><rect x='1741.1' y='402.1' width='3.0' height='4.0' fill='#e63ae6' fill-opacity='1'/><rect x='1747.3' y='402.4' width='3.0' height='4.0' fill='#e63ae6' fill-opacity='1'/><rect x='1753.5' y='402.8' width='3.0' height='4.0' fill='#e63ae6' fill-opacity='1'/><rect x='2115.8' y='429.7' width='5.2' height='4.1' fill='#e63ae6' fill-opacity='1'/><rect x='2080.0' y='442.0' width='20.0' height='4.5' fill='#e63ae6' fill-opacity='1'/><rect x='2101.0' y='442.0' width='18.0' height='4.5' fill='#f03a26' fill-opacity='1'/></g><g filter='url(#b2)'><rect x='1300' y='497' width='5.5' height='172' fill='#3b3b3b'/><rect x='1512' y='495' width='7' height='206' fill='#3d3d3d'/><rect x='1406' y='525' width='4' height='60' fill='#3a3a3a'/><path d='M1440 572 L1470 578 L1492 590 L1498 642 L1470 650 L1448 640 Z' fill='#424242'/><rect x='1415' y='566' width='22' height='30' rx='5' fill='#4b4d4b'/><path d='M1452 592 L1476 590 L1480 615 L1456 618 Z' fill='#525252'/><path d='M1219 744 Q1222 735 1236 734 L1262 736 L1533 724 L1551 727 Q1560 730 1560 740 L1560 817 Q1545 850 1497 863 Q1440 879 1390 879 Q1335 879 1283 863 Q1230 848 1219 824 Z' fill='url(#bg1)'/><path d='M1219 744 Q1222 735 1236 734 L1262 736 L1533 724 L1551 727 Q1560 730 1560 740 L1560 817 Q1545 850 1497 863 Q1440 879 1390 879 Q1335 879 1283 863 Q1230 848 1219 824 Z' fill='url(#bg2)'/><path d='M1219 744 Q1222 735 1236 734 L1262 736 L1533 724 L1551 727 Q1560 730 1560 741 Q1552 762 1533 774 Q1515 790 1490 795 Q1440 803 1390 802 Q1340 800 1297 790 Q1272 784 1258 777 Q1234 764 1219 744 Z' fill='#131313'/><path d='M1265 700 Q1266 682 1300 672 L1384 656 L1392 632 Q1394 625 1404 625 L1452 625 Q1462 625 1464 634 L1473 655 L1510 672 Q1531 682 1531 700 L1531 742 A133 36 0 0 1 1265 742 Z' fill='#111111'/><path d='M1394 628 L1462 628 L1470 655 Q1430 668 1386 657 Z' fill='#161616'/><path d='M1290 783 Q1330 794 1390 797 Q1455 798 1492 793' fill='none' stroke='#3d3d3d' stroke-width='6' stroke-linecap='round'/><path d='M1296 743 Q1322 731 1352 741 Q1322 737 1296 743Z' fill='#3e3e3e' stroke='#3a3a3a' stroke-width='3'/><path d='M1256 764 Q1270 756 1284 768' fill='none' stroke='#484848' stroke-width='4.5'/><rect x='1435' y='500' width='7' height='227' fill='#454545'/></g><g filter='url(#b2)'><ellipse cx='1392.7' cy='481.5' rx='146' ry='20.5' fill='#0a080a' transform='rotate(1.2 1392.7 481.5)'/></g></g></svg>
<div class='t' style='left:958.5px;top:14.1px;font-size:25.5px;line-height:25.5px;font-weight:700;color:#5e5e5e;letter-spacing:0.34px;'>/opt/ros/humble/share/turtlebot4_viz/rviz/model.rviz* - RViz</div>
<div class='t' style='left:20.2px;top:57.7px;font-size:25px;line-height:25px;font-weight:400;color:#202020;letter-spacing:-0.30px;'>File</div>
<div class='t' style='left:87.0px;top:57.7px;font-size:25px;line-height:25px;font-weight:400;color:#202020;letter-spacing:-0.16px;'>Panels</div>
<div class='t' style='left:190.5px;top:57.7px;font-size:25px;line-height:25px;font-weight:400;color:#202020;letter-spacing:0.29px;'>Help</div>
<div class='t' style='left:66.6px;top:121.2px;font-size:23px;line-height:23px;font-weight:400;color:#202020;letter-spacing:0.69px;'>Interact</div>
<div class='t' style='left:235.4px;top:121.2px;font-size:23px;line-height:23px;font-weight:400;color:#202020;letter-spacing:-0.17px;'>Move Camera</div>
<div class='t' style='left:465.6px;top:121.2px;font-size:23px;line-height:23px;font-weight:400;color:#202020;letter-spacing:-0.23px;'>Select</div>
<div class='t' style='left:615.8px;top:121.2px;font-size:23px;line-height:23px;font-weight:400;color:#202020;letter-spacing:-0.46px;'>Focus Camera</div>
<div class='t' style='left:846.0px;top:121.2px;font-size:23px;line-height:23px;font-weight:400;color:#202020;letter-spacing:0.04px;'>Measure</div>
<div class='t' style='left:1021.1px;top:121.2px;font-size:23px;line-height:23px;font-weight:400;color:#202020;letter-spacing:-0.20px;'>2D Pose Estimate</div>
<div class='t' style='left:1286.6px;top:121.2px;font-size:23px;line-height:23px;font-weight:400;color:#202020;letter-spacing:-0.37px;'>2D Goal Pose</div>
<div class='t' style='left:1511.8px;top:121.2px;font-size:23px;line-height:23px;font-weight:400;color:#202020;letter-spacing:0.19px;'>Publish Point</div>
<div class='t' style='left:51.8px;top:181.2px;font-size:25px;line-height:25px;font-weight:400;color:#202020;letter-spacing:-0.10px;'>Displays</div>
<div class='t' style='left:91.5px;top:223.2px;font-size:25px;line-height:25px;font-weight:400;color:#202020;letter-spacing:0.27px;'>Global Options</div>
<div class='t' style='left:87.9px;top:261.0px;font-size:25px;line-height:25px;font-weight:400;color:#202020;letter-spacing:-0.22px;'>Fixed Frame</div>
<div class='t' style='left:347.7px;top:261.0px;font-size:25px;line-height:25px;font-weight:400;color:#202020;letter-spacing:-0.09px;'>base_link</div>
<div class='t' style='left:87.9px;top:298.8px;font-size:25px;line-height:25px;font-weight:400;color:#202020;letter-spacing:0.18px;'>Background Color</div>
<div class='t' style='left:387.5px;top:298.8px;font-size:25px;line-height:25px;font-weight:400;color:#202020;letter-spacing:-0.30px;'>48; 48; 48</div>
<div class='t' style='left:87.9px;top:336.8px;font-size:25px;line-height:25px;font-weight:400;color:#202020;letter-spacing:-0.30px;'>Frame Rate</div>
<div class='t' style='left:347.7px;top:336.8px;font-size:25px;line-height:25px;font-weight:400;color:#202020;letter-spacing:0.09px;'>30</div>
<div class='t' style='left:91.5px;top:374.8px;font-size:25px;line-height:25px;font-weight:400;color:#202020;letter-spacing:-0.09px;'>Global Status: Ok</div>
<div class='t' style='left:131.7px;top:412.7px;font-size:25px;line-height:25px;font-weight:400;color:#202020;letter-spacing:-0.23px;'>Fixed Frame</div>
<div class='t' style='left:347.7px;top:412.7px;font-size:25px;line-height:25px;font-weight:400;color:#202020;letter-spacing:-0.46px;'>OK</div>
<div class='t' style='left:91.5px;top:450.6px;font-size:25px;line-height:25px;font-weight:700;color:#3f7fbf;letter-spacing:0.25px;'>Grid</div>
<div class='t' style='left:91.5px;top:488.5px;font-size:25px;line-height:25px;font-weight:700;color:#3f7fbf;letter-spacing:0.17px;'>RobotModel</div>
<div class='t' style='left:91.5px;top:526.4px;font-size:25px;line-height:25px;font-weight:700;color:#3f7fbf;letter-spacing:-0.49px;'>LaserScan</div>
<div class='t' style='left:91.5px;top:564.2px;font-size:25px;line-height:25px;font-weight:700;color:#c49a1a;letter-spacing:0.13px;'>Camera</div>
<div class='t' style='left:61.0px;top:1038.8px;font-size:25px;line-height:25px;font-weight:400;color:#202020;letter-spacing:0.24px;'>Add</div>
<div class='t' style='left:201.7px;top:1038.8px;font-size:25px;line-height:25px;font-weight:400;color:#bdbdbd;letter-spacing:0.37px;text-shadow:1px 1px 0 #fff;'>Duplicate</div>
<div class='t' style='left:382.2px;top:1038.8px;font-size:25px;line-height:25px;font-weight:400;color:#bdbdbd;letter-spacing:-0.32px;text-shadow:1px 1px 0 #fff;'>Remove</div>
<div class='t' style='left:553.8px;top:1038.8px;font-size:25px;line-height:25px;font-weight:400;color:#bdbdbd;letter-spacing:-0.27px;text-shadow:1px 1px 0 #fff;'>Rename</div>
<div class='t' style='left:51.7px;top:1107.4px;font-size:25px;line-height:25px;font-weight:400;color:#202020;letter-spacing:-0.19px;'>Camera</div>
<div class='t' style='left:2245.2px;top:181.7px;font-size:25px;line-height:25px;font-weight:400;color:#202020;letter-spacing:-0.33px;'>Views</div>
<div class='t' style='left:2196.9px;top:239.7px;font-size:25px;line-height:25px;font-weight:400;color:#202020;letter-spacing:0.13px;'>Type:</div>
<div class='t' style='left:2279.3px;top:239.7px;font-size:25px;line-height:25px;font-weight:400;color:#202020;letter-spacing:0.14px;overflow:hidden;width:237.6px;height:30px;'>Orbit (rviz_default_plu</div>
<div class='t' style='left:2624.5px;top:239.7px;font-size:25px;line-height:25px;font-weight:400;color:#202020;letter-spacing:0.47px;'>Zero</div>
<div class='t' style='left:2241.5px;top:299.4px;font-size:25px;line-height:25px;font-weight:700;color:#111;letter-spacing:0.30px;'>Current View</div>
<div class='t' style='left:2469.7px;top:299.4px;font-size:25px;line-height:25px;font-weight:700;color:#111;letter-spacing:0.32px;'>Orbit (rviz)</div>
<div class='t' style='left:2281.7px;top:333.4px;font-size:25px;line-height:25px;font-weight:400;color:#202020;letter-spacing:-0.09px;'>Near Clip Dist...</div>
<div class='t' style='left:2469.7px;top:333.4px;font-size:25px;line-height:25px;font-weight:400;color:#202020;letter-spacing:-0.82px;'>0.01</div>
<div class='t' style='left:2281.7px;top:367.4px;font-size:25px;line-height:25px;font-weight:400;color:#202020;letter-spacing:0.17px;'>Invert Z Axis</div>
<div class='t' style='left:2281.7px;top:401.4px;font-size:25px;line-height:25px;font-weight:400;color:#202020;letter-spacing:0.04px;'>Target Frame</div>
<div class='t' style='left:2469.7px;top:401.4px;font-size:25px;line-height:25px;font-weight:400;color:#202020;letter-spacing:-0.36px;'>&lt;Fixed Frame&gt;</div>
<div class='t' style='left:2281.7px;top:435.4px;font-size:25px;line-height:25px;font-weight:400;color:#202020;letter-spacing:0.04px;'>Distance</div>
<div class='t' style='left:2469.7px;top:435.4px;font-size:25px;line-height:25px;font-weight:400;color:#202020;letter-spacing:-0.11px;'>1.0433</div>
<div class='t' style='left:2281.7px;top:469.4px;font-size:25px;line-height:25px;font-weight:400;color:#202020;letter-spacing:-0.78px;'>Focal Shape S...</div>
<div class='t' style='left:2469.7px;top:469.4px;font-size:25px;line-height:25px;font-weight:400;color:#202020;letter-spacing:-0.14px;'>0.05</div>
<div class='t' style='left:2281.7px;top:503.4px;font-size:25px;line-height:25px;font-weight:400;color:#202020;letter-spacing:-0.62px;'>Focal Shape F...</div>
<div class='t' style='left:2281.7px;top:537.4px;font-size:25px;line-height:25px;font-weight:400;color:#202020;letter-spacing:-0.36px;'>Yaw</div>
<div class='t' style='left:2469.7px;top:537.4px;font-size:25px;line-height:25px;font-weight:400;color:#202020;letter-spacing:-0.16px;'>0.940387</div>
<div class='t' style='left:2281.7px;top:571.4px;font-size:25px;line-height:25px;font-weight:400;color:#202020;letter-spacing:0.08px;'>Pitch</div>
<div class='t' style='left:2469.7px;top:571.4px;font-size:25px;line-height:25px;font-weight:400;color:#202020;letter-spacing:-0.16px;'>0.320399</div>
<div class='t' style='left:2281.7px;top:605.4px;font-size:25px;line-height:25px;font-weight:400;color:#202020;letter-spacing:-0.11px;'>Focal Point</div>
<div class='t' style='left:2469.7px;top:605.4px;font-size:25px;line-height:25px;font-weight:400;color:#202020;letter-spacing:-0.34px;'>0.10681; 0.21921; 0.1...</div>
<div class='t' style='left:2255.5px;top:1251.2px;font-size:25px;line-height:25px;font-weight:400;color:#202020;letter-spacing:-0.65px;'>Save</div>
<div class='t' style='left:2419.4px;top:1251.2px;font-size:25px;line-height:25px;font-weight:400;color:#202020;letter-spacing:-0.22px;'>Remove</div>
<div class='t' style='left:2599.5px;top:1251.2px;font-size:25px;line-height:25px;font-weight:400;color:#202020;letter-spacing:-0.08px;'>Rename</div>
<div class='t' style='left:51.3px;top:1314.7px;font-size:25px;line-height:25px;font-weight:400;color:#202020;letter-spacing:0.59px;'>Time</div>
<div class='t' style='left:21.5px;top:1376.9px;font-size:25px;line-height:25px;font-weight:400;color:#202020;letter-spacing:-0.63px;'>ROS Time:</div>
<div class='t' style='left:155.0px;top:1375.2px;font-size:25px;line-height:25px;font-weight:400;color:#202020;letter-spacing:-0.10px;'>1758920443.17</div>
<div class='t' style='left:377.4px;top:1376.9px;font-size:25px;line-height:25px;font-weight:400;color:#202020;letter-spacing:-0.79px;'>ROS Elapsed:</div>
<div class='t' style='left:543.2px;top:1375.2px;font-size:25px;line-height:25px;font-weight:400;color:#202020;letter-spacing:0.01px;'>27.25</div>
<div class='t' style='left:764.3px;top:1376.9px;font-size:25px;line-height:25px;font-weight:400;color:#202020;letter-spacing:0.22px;'>Wall Time:</div>
<div class='t' style='left:899.1px;top:1375.2px;font-size:25px;line-height:25px;font-weight:400;color:#202020;letter-spacing:-0.09px;'>1758920443.20</div>
<div class='t' style='left:1120.9px;top:1376.9px;font-size:25px;line-height:25px;font-weight:400;color:#202020;letter-spacing:-0.19px;'>Wall Elapsed:</div>
<div class='t' style='left:1287.3px;top:1375.2px;font-size:25px;line-height:25px;font-weight:400;color:#202020;letter-spacing:0.01px;'>27.25</div>
<div class='t' style='left:2551.2px;top:1377.4px;font-size:25px;line-height:25px;font-weight:400;color:#202020;letter-spacing:0.43px;'>Experimental</div>
<div class='t' style='left:19.0px;top:1447.1px;font-size:25px;line-height:25px;font-weight:400;color:#202020;letter-spacing:-0.28px;'>Reset</div>
<div class='t' style='left:2664.2px;top:1438.9px;font-size:25px;line-height:25px;font-weight:400;color:#202020;letter-spacing:1.03px;'>31 fps</div>
</div></body></html>
